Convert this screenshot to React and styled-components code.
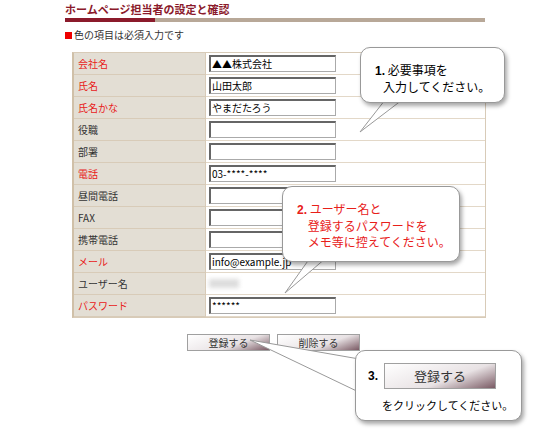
import React from "react";
import styled, { createGlobalStyle } from "styled-components";

const G = createGlobalStyle`
  body{margin:0;background:#fff;font-family:"Noto Sans CJK JP","Liberation Sans",sans-serif;font-size:10px;color:#333;}
`;
const Page = styled.div`position:relative;width:550px;height:429px;overflow:hidden;padding:3px 0 0 65px;box-sizing:border-box;`;
const Title = styled.div`font-size:11px;font-weight:bold;color:#8b1a2b;line-height:13px;`;
const Bar = styled.div`width:420px;height:4px;margin-top:2px;background:linear-gradient(to right,#8b1a2b 90px,#b8a898 90px);`;
const Note = styled.div`margin-top:7px;font-size:10px;line-height:12px;&::before{content:"";display:inline-block;width:7px;height:7px;background:#e00;margin-right:2px;}`;
const Table = styled.div`margin:11px 0 0 7px;width:411px;display:grid;grid-template-columns:132px 1fr;border:1px solid #d8cbb8;border-left:2px solid #d0c0a8;`;
const Label = styled.div`height:21px;display:flex;align-items:center;padding-left:4px;background:#e3ded4;border-bottom:1px solid #d8cbb8;border-right:1px solid #d8cbb8;color:${p=>p.req?"#e8201a":"#333"};font-size:10px;`;
const Cell = styled.div`height:21px;display:flex;align-items:center;padding-left:3px;border-bottom:1px solid #e3d8c8;`;
const Input = styled.div`width:123px;height:14px;border:1px solid #aaa;border-top:2px solid #666;border-left:2px solid #666;font-size:10px;line-height:14px;padding-left:1px;color:#000;`;
const Blur = styled.div`width:30px;height:9px;background:#ddd;filter:blur(2px);`;
const Buttons = styled.div`display:flex;gap:7px;margin:16px 0 0 122px;`;
const Btn = styled.div`width:${p=>p.w||83}px;height:${p=>p.h||17}px;border:1px solid #a0a0a0;background:linear-gradient(160deg,#fff 0%,#e8e2e4 60%,#7a5a64 100%);display:flex;align-items:center;justify-content:center;font-size:${p=>p.fs||10}px;color:#333;box-sizing:border-box;`;
const Bubble = styled.div`position:absolute;left:${p=>p.x}px;top:${p=>p.y}px;width:${p=>p.w}px;height:${p=>p.h}px;background:#fff;border:1px solid #999;border-radius:10px;box-shadow:2px 3px 4px rgba(0,0,0,.35);box-sizing:border-box;font-size:12px;line-height:16px;color:${p=>p.c||"#000"};`;
const Tail = styled.svg`position:absolute;left:${p=>p.x}px;top:${p=>p.y}px;overflow:visible;`;
const Num = styled.b`font-family:"Liberation Sans",sans-serif;`;

const rows=[["会社名",1,"▲▲株式会社"],["氏名",1,"山田太郎"],["氏名かな",1,"やまだたろう"],["役職",0,""],["部署",0,""],["電話",1,"03-****-****"],["昼間電話",0,""],["FAX",0,""],["携帯電話",0,""],["メール",1,"info@example.jp"],["ユーザー名",0,null],["パスワード",1,"******"]];

export default function App(){
  return <Page><G/>
    <Title>ホームページ担当者の設定と確認</Title>
    <Bar/>
    <Note>色の項目は必須入力です</Note>
    <Table>
      {rows.map(([l,r,v])=><React.Fragment key={l}>
        <Label req={r}>{l}</Label>
        <Cell>{v===null?<Blur/>:<Input>{v}</Input>}</Cell>
      </React.Fragment>)}
    </Table>
    <Buttons><Btn>登録する</Btn><Btn>削除する</Btn></Buttons>

    <Tail x={0} y={0} width="550" height="429">
      <polygon points="385,100 402,100 360,132" fill="#fff" stroke="#999"/>
      <polygon points="310,258 326,258 285,293" fill="#fff" stroke="#999"/>
      <polygon points="250,340 365,360 365,395" fill="#fff" stroke="#999"/>
    </Tail>
    <Bubble x={360} y={47} w={145} h={56} style={{padding:"14px 0 0 14px"}}><Num>1.</Num> 必要事項を<br/>&nbsp;&nbsp;&nbsp;入力してください。</Bubble>
    <Bubble x={282} y={186} w={178} h={76} c="#e8201a" style={{padding:"14px 0 0 14px"}}><Num>2.</Num> ユーザー名と<br/>&nbsp;&nbsp;&nbsp;&nbsp;登録するパスワードを<br/>&nbsp;&nbsp;&nbsp;&nbsp;メモ等に控えてください。</Bubble>
    <Bubble x={355} y={350} w={167} h={71} style={{padding:"12px 0 0 12px"}}>
      <div style={{display:"flex",alignItems:"center",gap:6}}><Num>3.</Num><Btn w={112} h={26} fs={13}>登録する</Btn></div>
      <div style={{marginTop:8,paddingLeft:14,fontSize:11}}>をクリックしてください。</div>
    </Bubble>
  </Page>;
}
